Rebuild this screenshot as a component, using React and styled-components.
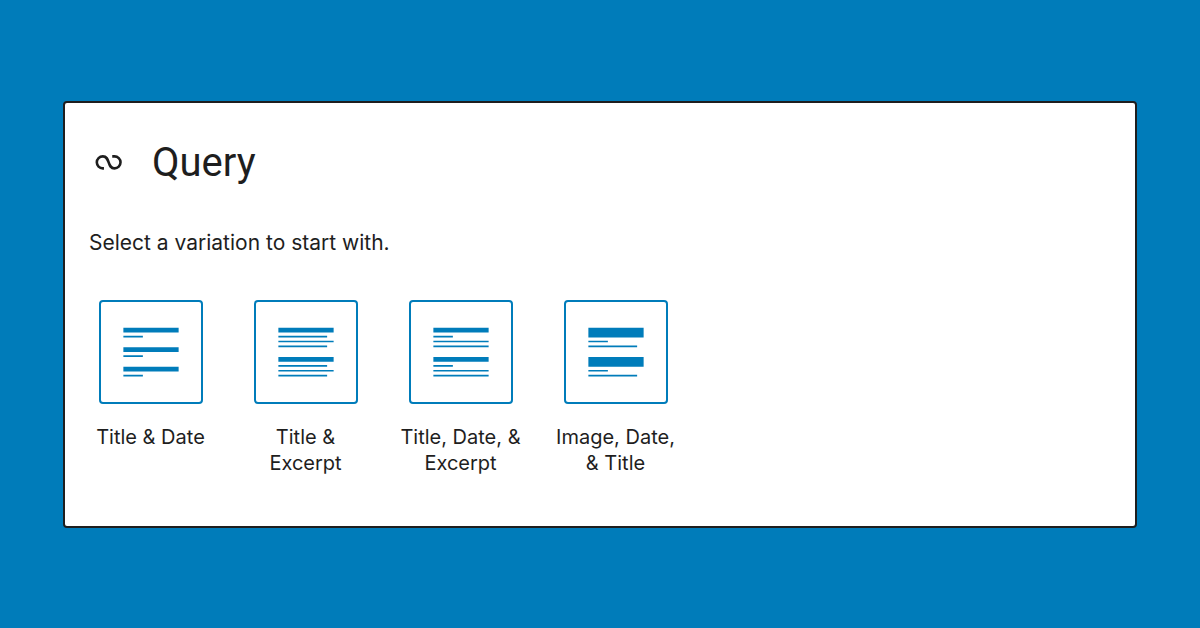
import React from 'react';
import styled, { createGlobalStyle } from 'styled-components';

const GlobalStyle = createGlobalStyle`
  *, *::before, *::after { box-sizing: border-box; }
  body {
    margin: 0;
    background: #007cba;
    color: #1e1e1e;
    font-family: Inter, "Liberation Sans", sans-serif;
  }
`;

const Page = styled.main`
  min-height: 100vh;
  display: flex;
  align-items: center;
  padding: 24px 63px;
`;

const Placeholder = styled.section`
  flex: 1;
  padding: 32px 24px 50px;
  background: #fff;
  border: 2px solid #1e1e1e;
  border-radius: 4px;
`;

const Heading = styled.h1`
  display: flex;
  align-items: center;
  gap: 24px;
  margin: 0;
  font-family: Roboto, Inter, sans-serif;
  font-size: 40px;
  font-weight: 400;
  line-height: 56px;
`;

const BlockIcon = styled.svg`
  width: 39px;
  height: 39px;
  fill: none;
  stroke: currentColor;
`;

const Instructions = styled.p`
  margin: 36px 0 41px;
  font-size: 21px;
  line-height: 32px;
`;

const VariationList = styled.ul`
  display: flex;
  flex-wrap: wrap;
  gap: 32px;
  margin: 0;
  padding: 0;
  list-style: none;
`;

const Variation = styled.li`
  width: 123px;
`;

const VariationButton = styled.button`
  display: flex;
  flex-direction: column;
  align-items: center;
  gap: 20px;
  width: 100%;
  padding: 0;
  border: 0;
  background: none;
  color: inherit;
  font: inherit;
  cursor: pointer;
`;

const Thumbnail = styled.svg`
  width: 104px;
  height: 104px;
  padding: 11px;
  border: 2px solid #007cba;
  border-radius: 4px;
  fill: #007cba;
`;

const Label = styled.span`
  font-size: 20px;
  line-height: 26px;
  text-align: center;
`;

const variations = [
  {
    label: 'Title & Date',
    path: 'M41 9H7v3h34V9zm-22 5H7v1h12v-1zM7 26h12v1H7v-1zm34-5H7v3h34v-3zM7 38h12v1H7v-1zm34-5H7v3h34v-3z',
  },
  {
    label: 'Title & Excerpt',
    path: 'M41 9H7v3h34V9zm-4 5H7v1h30v-1zm4 3H7v1h34v-1zM7 20h30v1H7v-1zm0 12h30v1H7v-1zm34 3H7v1h34v-1zM7 38h30v1H7v-1zm34-11H7v3h34v-3z',
  },
  {
    label: 'Title, Date, & Excerpt',
    path: 'M41 9H7v3h34V9zm-22 5H7v1h12v-1zm22 3H7v1h34v-1zM7 20h34v1H7v-1zm0 12h12v1H7v-1zm34 3H7v1h34v-1zM7 38h34v1H7v-1zm34-11H7v3h34v-3z',
  },
  {
    label: 'Image, Date, & Title',
    path: 'M7 9h34v6H7V9zm12 8H7v1h12v-1zm18 3H7v1h30v-1zm0 18H7v1h30v-1zM7 35h12v1H7v-1zm34-8H7v6h34v-6z',
  },
];

export default function App() {
  return (
    <>
      <GlobalStyle />
      <Page>
        <Placeholder>
          <Heading>
            <BlockIcon viewBox="0 0 24 24" strokeWidth="1.6" aria-hidden="true">
              <path d="M9.2 15.6H8.5a3.7 3.7 0 0 1 0-7.4C10.8 8.2 11.4 9.8 12.1 11.9S13.4 15.6 15.7 15.6a3.7 3.7 0 0 0 0-7.4h-1.4" />
            </BlockIcon>
            Query
          </Heading>
          <Instructions>Select a variation to start with.</Instructions>
          <VariationList>
            {variations.map(({ label, path }) => (
              <Variation key={label}>
                <VariationButton type="button">
                  <Thumbnail viewBox="0 0 48 48" aria-hidden="true">
                    <path d={path} />
                  </Thumbnail>
                  <Label>{label}</Label>
                </VariationButton>
              </Variation>
            ))}
          </VariationList>
        </Placeholder>
      </Page>
    </>
  );
}
